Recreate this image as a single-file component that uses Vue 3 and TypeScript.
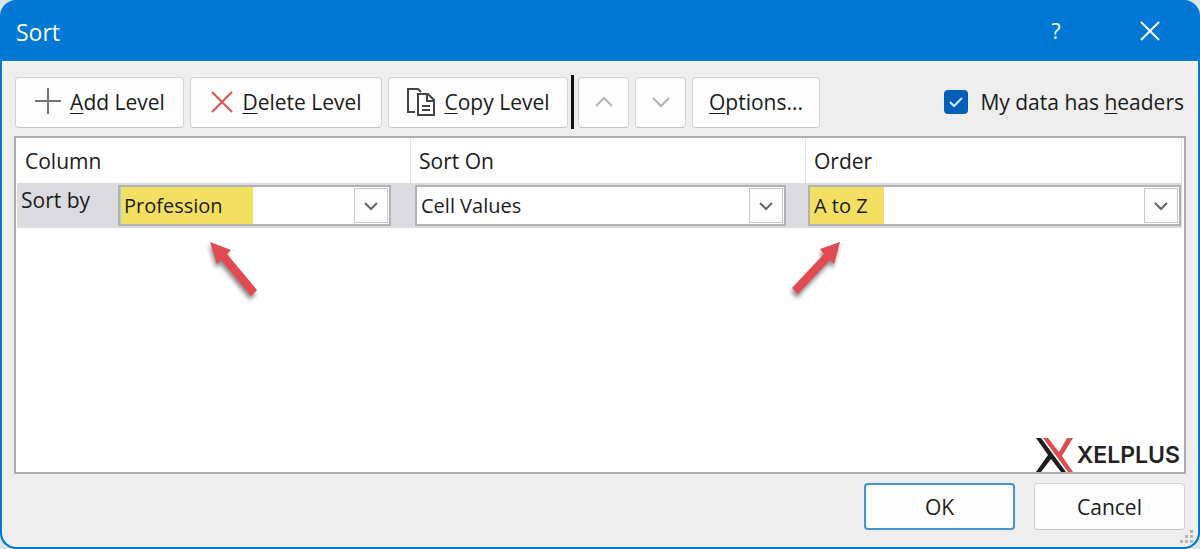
<script setup lang="ts">
import { ref } from 'vue'

const hasHeaders = ref(true)
const column = ref('Profession')
const sortOn = ref('Cell Values')
const order = ref('A to Z')
</script>

<template>
  <main class="dialog" role="dialog" aria-labelledby="dialog-title">
    <header class="titlebar">
      <h1 id="dialog-title">Sort</h1>
      <button class="caption" type="button" aria-label="Help">?</button>
      <button class="caption close" type="button" aria-label="Close">
        <svg width="20" height="20" viewBox="0 0 20 20"><path d="M1 1 19 19M19 1 1 19" /></svg>
      </button>
    </header>

    <div class="content">
      <div class="toolbar">
        <button class="btn add" type="button">
          <svg width="28" height="28" viewBox="0 0 28 28" fill="none" stroke="#777" stroke-width="2"><path d="M1 13H27M14 0V26" /></svg>
          <span><u>A</u>dd Level</span>
        </button>
        <button class="btn delete" type="button">
          <svg width="24" height="24" viewBox="0 0 24 24" fill="none" stroke="#e0504f" stroke-width="2"><path d="M2 2 22 22M22 2 2 22" /></svg>
          <span><u>D</u>elete Level</span>
        </button>
        <button class="btn copy" type="button">
          <svg width="30" height="30" viewBox="0 0 30 30" fill="none" stroke="#444" stroke-width="2">
            <path d="M9 25H2V2H12L15 5" />
            <path d="M12 7H22L28 13V28H12Z" fill="#fff" />
            <path d="M21 7V14H28M16 19H24M16 23H24" />
          </svg>
          <span><u>C</u>opy Level</span>
        </button>
        <span class="divider"></span>
        <button class="btn move" type="button" aria-label="Move Up">
          <svg width="18" height="12" viewBox="0 0 18 12" fill="none" stroke="#b4b4b4" stroke-width="2"><path d="M1 10 9 2 17 10" /></svg>
        </button>
        <button class="btn move" type="button" aria-label="Move Down">
          <svg width="18" height="12" viewBox="0 0 18 12" fill="none" stroke="#b4b4b4" stroke-width="2"><path d="M1 2 9 10 17 2" /></svg>
        </button>
        <button class="btn options" type="button"><span><u>O</u>ptions...</span></button>
        <label class="headers">
          <input v-model="hasHeaders" type="checkbox" />
          <svg class="tick" width="24" height="24" viewBox="0 0 24 24" fill="none" stroke="#d9ecff" stroke-width="2"><path d="M6 12 10 16 18 8" /></svg>
          <span>My data has <u>h</u>eaders</span>
        </label>
      </div>

      <section class="list">
        <table>
          <thead>
            <tr>
              <th scope="col">Column</th>
              <th scope="col">Sort On</th>
              <th scope="col">Order</th>
            </tr>
          </thead>
          <tbody>
            <tr>
              <td class="first">
                <label for="column">Sort by</label>
                <div class="combo">
                  <select id="column" v-model="column" class="mark-column"><option>Profession</option></select>
                  <span class="drop"><svg width="14" height="10" viewBox="0 0 14 10"><path d="M1 2 7 8 13 2" /></svg></span>
                </div>
              </td>
              <td>
                <div class="combo">
                  <select v-model="sortOn" aria-label="Sort On"><option>Cell Values</option></select>
                  <span class="drop"><svg width="14" height="10" viewBox="0 0 14 10"><path d="M1 2 7 8 13 2" /></svg></span>
                </div>
              </td>
              <td class="last">
                <div class="combo">
                  <select v-model="order" aria-label="Order" class="mark-order"><option>A to Z</option></select>
                  <span class="drop"><svg width="14" height="10" viewBox="0 0 14 10"><path d="M1 2 7 8 13 2" /></svg></span>
                </div>
              </td>
            </tr>
          </tbody>
        </table>

        <svg class="arrow to-column" width="60" height="70" viewBox="0 0 60 70"><path d="M7 6 28 14 24 18 54 54 48 60 18 24 14 28Z" /></svg>
        <svg class="arrow to-order" width="60" height="70" viewBox="0 0 60 70"><path d="M52 6 32 13 36 18 4 52 10 58 42 24 46 28Z" /></svg>

        <div class="brand">
          <svg width="38" height="34" viewBox="0 0 38 34">
            <path d="M0 0H5L30 34H25L15 21 5 34H0L12 17Z" fill="#1d1d1f" />
            <path d="M7 0H12L23 14 31 0H37L26 18 37 34H32Z" fill="#dc4c52" />
          </svg>
          <span>XELPLUS</span>
        </div>
      </section>

      <footer class="actions">
        <button class="btn primary" type="button">OK</button>
        <button class="btn" type="button">Cancel</button>
      </footer>
      <svg class="grip" width="14" height="14" viewBox="0 0 14 14" fill="#b4b4b4">
        <path d="M10 0h3v3h-3zM5 5h3v3h-3zM10 5h3v3h-3zM0 10h3v3h-3zM5 10h3v3h-3zM10 10h3v3h-3z" />
      </svg>
    </div>
  </main>
</template>

<style>
body {
  background: #dce5ec;
}
</style>

<style scoped>
* {
  box-sizing: border-box;
}

.dialog {
  display: flex;
  flex-direction: column;
  min-height: 100vh;
  padding: 0 2px 2px;
  border-radius: 16px;
  background: #0078d4;
  color: #1b1b1b;
  font: 21px/30px "Open Sans", "Noto Sans", sans-serif;
}

button,
select {
  font: inherit;
  color: inherit;
}

.titlebar {
  display: flex;
  align-items: center;
  height: 61px;
  padding: 0 36px 0 14px;
  color: #fff;
}

h1 {
  flex: 1;
  margin: 0;
  padding-top: 2px;
  font-size: 23px;
  font-weight: 400;
}

.caption {
  width: 24px;
  height: 40px;
  padding: 0;
  border: 0;
  background: none;
}

.close {
  display: grid;
  place-items: center;
  margin-left: 70px;
}

.close path {
  fill: none;
  stroke: #fff;
  stroke-width: 2;
}

.content {
  position: relative;
  display: flex;
  flex: 1;
  flex-direction: column;
  padding: 13px 12px 16px;
  border: 1px solid #fbfdff;
  border-radius: 0 0 14px 14px;
  background: #eee;
}

.toolbar {
  display: flex;
  align-items: center;
  gap: 6px;
  height: 54px;
}

.btn {
  display: flex;
  align-items: center;
  justify-content: center;
  gap: 8px;
  height: 51px;
  padding: 0;
  border: 1px solid #d2d2d2;
  border-bottom-color: #c4c4c4;
  border-radius: 4px;
  background: #fdfdfd;
  white-space: nowrap;
}

u {
  text-decoration-thickness: 1px;
  text-decoration-skip-ink: none;
  text-underline-offset: 3px;
}

.add {
  width: 169px;
}

.delete {
  width: 192px;
}

.copy {
  width: 180px;
}

.move {
  width: 51px;
}

.options {
  width: 128px;
}

.divider {
  width: 3px;
  height: 54px;
  margin: 0 -2px 0 -3px;
  background: #111;
}

.headers {
  position: relative;
  display: flex;
  align-items: center;
  gap: 12px;
  margin-left: auto;
  padding-right: 1px;
}

.headers input {
  width: 24px;
  height: 24px;
  margin: 0;
  border-radius: 4px;
  background: #005fb8;
  appearance: none;
}

.headers input:not(:checked) {
  border: 1px solid #777;
  background: #fff;
}

.tick {
  position: absolute;
  left: 0;
  pointer-events: none;
}

.headers input:not(:checked) + .tick {
  visibility: hidden;
}

.list {
  position: relative;
  flex: 1;
  min-height: 240px;
  margin: 7px -1px 0;
  padding: 0 2px 0 1px;
  border: 2px solid #adadad;
  background: #fff;
}

table,
thead,
tbody {
  display: block;
}

tr {
  display: grid;
  grid-template-columns: 394fr 395fr 376fr;
}

th {
  height: 45px;
  padding: 8px;
  border-right: 1px solid #e2e2e2;
  font-weight: 400;
  text-align: left;
}

tbody tr {
  background: #dcdce0;
}

td {
  display: flex;
  height: 45px;
  padding: 2px 20px 2px 4px;
}

td.last {
  padding-right: 1px;
  padding-left: 2px;
}

.first label {
  width: 97px;
}

.combo {
  position: relative;
  flex: 1;
}

select {
  width: 100%;
  height: 41px;
  padding: 0 40px 0 4px;
  border: 2px solid #b2b2b5;
  border-radius: 0;
  background: #fff;
  font-size: 20px;
  appearance: none;
}

.mark-column {
  background: linear-gradient(90deg, #9bd0f5 1px, #f3df62 1px 133px, #fff 133px);
}

.mark-order {
  background: linear-gradient(90deg, #f3df62 74px, #fff 74px);
}

.drop {
  position: absolute;
  top: 3px;
  right: 3px;
  display: grid;
  place-items: center;
  width: 34px;
  height: 35px;
  border: 1px solid #c8c8c8;
  background: #fdfdfd;
  pointer-events: none;
}

.drop path {
  fill: none;
  stroke: #666;
  stroke-width: 2;
}

.arrow {
  position: absolute;
  top: 98px;
  fill: #e04a50;
  filter: drop-shadow(-1px 4px 2px rgb(0 0 0 / 45%));
}

.to-column {
  left: 187px;
}

.to-order {
  left: 772px;
}

.brand {
  position: absolute;
  right: 4px;
  bottom: 0;
  display: flex;
  align-items: center;
  gap: 3px;
  color: #222;
  font: 600 23px/34px Inter, sans-serif;
}

.actions {
  display: flex;
  justify-content: flex-end;
  gap: 19px;
  margin-top: 9px;
}

.actions .btn {
  width: 151px;
  height: 47px;
}

.actions .primary {
  border: 2px solid #4594d1;
}

.grip {
  position: absolute;
  right: 3px;
  bottom: 2px;
}
</style>
